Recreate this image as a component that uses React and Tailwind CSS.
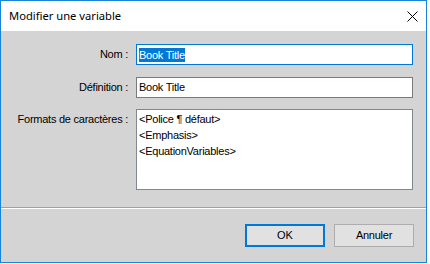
import React from 'react';

const ui = { fontFamily: '"Liberation Sans", Arial, sans-serif' };

const Label = ({ children, className = '' }) => (
  <div className={`text-right text-[11px] tracking-[-0.25px] text-black ${className}`}>{children}</div>
);

export default function App() {
  return (
    <div className="w-[430px] h-[264px] bg-white">
      <div className="w-[427px] h-[263px] border border-[#1883d7] flex flex-col bg-white" style={ui}>
        {/* title bar */}
        <div className="h-[30px] shrink-0 flex items-center justify-between pl-2 pr-[8px] bg-white">
          <span className="text-[11.2px] text-black" style={{ fontFamily: '"Noto Sans", "Open Sans", sans-serif' }}>
            Modifier une variable
          </span>
          <svg width="11" height="11" viewBox="0 0 11 11" className="mt-[1px]">
            <path d="M0.5 0.5 L10.5 10.5 M10.5 0.5 L0.5 10.5" stroke="#000" strokeWidth="1" fill="none" />
          </svg>
        </div>

        {/* body */}
        <div className="flex-1 bg-[#d4d4d4] flex flex-col">
          <div className="pt-[13px] grid grid-cols-[127px_277px] gap-x-[8px] items-center">
            <Label>Nom :</Label>
            <div className="h-[21px] border border-[#0078d7] bg-white flex items-center pl-[2px] text-[11px] tracking-[-0.25px]">
              <span className="bg-[#0078d7] text-white leading-[14px]">Book Title</span>
            </div>

            <Label className="mt-[12px]">Définition :</Label>
            <div className="mt-[12px] h-[21px] border border-[#7a7a7a] bg-white flex items-center pl-[2px] text-[11px] tracking-[-0.25px] text-black">
              Book Title
            </div>

            <Label className="mt-[11px] self-start pt-[2px] leading-[16px]">Formats de caractères :</Label>
            <div className="mt-[11px] h-[81px] border border-[#828790] bg-white pt-[1px] pl-[2px] text-[11px] tracking-[-0.25px] text-black leading-[16px]">
              <div>&lt;Police ¶ défaut&gt;</div>
              <div>&lt;Emphasis&gt;</div>
              <div>&lt;EquationVariables&gt;</div>
            </div>
          </div>

          <div className="mt-[17px] border-t border-[#a0a0a0] border-b border-b-white" />

          <div className="pt-[15px] flex justify-end gap-[9px] pr-[12px]">
            <button className="w-[80px] h-[23px] border-2 border-[#0078d7] bg-[#e1e1e1] text-[11px] text-black flex items-center justify-center">
              OK
            </button>
            <button className="w-[80px] h-[23px] border border-[#adadad] bg-[#e1e1e1] text-[11px] tracking-[-0.25px] text-black flex items-center justify-center">
              Annuler
            </button>
          </div>
        </div>
      </div>
    </div>
  );
}
